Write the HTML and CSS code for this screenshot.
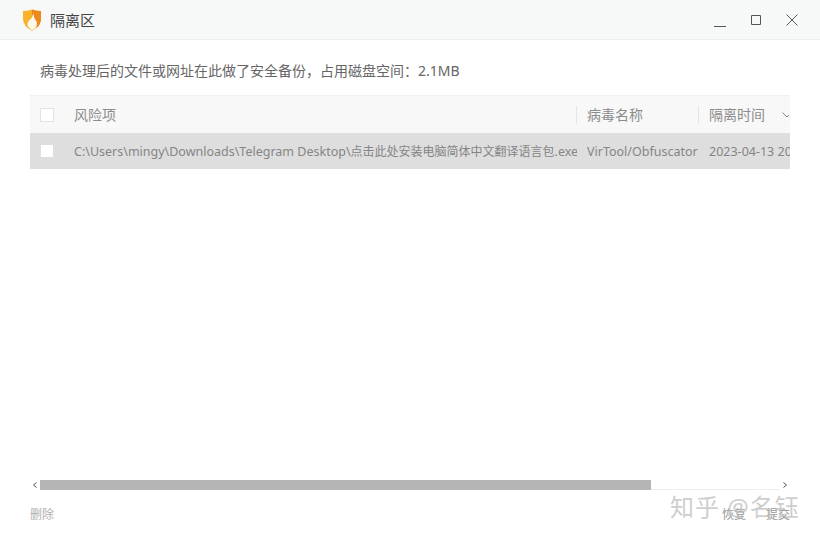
FILE: index.html
```html
<!DOCTYPE html>
<html lang="zh-CN">
<head>
<meta charset="utf-8">
<title>隔离区</title>
<link rel="stylesheet" href="styles.css">
</head>
<body>
<div class="window">
  <header class="titlebar">
    <svg class="logo" width="20" height="22" viewBox="0 0 20 22">
      <path d="M1 2 Q5 2 10 0.5 Q15 2 19 2 L19 10 Q19 17 10 22 Q1 17 1 10 Z" fill="#f7b32b"/>
      <path d="M10 0.5 Q15 2 19 2 L19 10 Q19 15 15 18.5 L10 5 Z" fill="#ee8a1c"/>
      <path d="M11.5 4.5 Q10.5 9 7 11.5 Q4.5 14.5 6 17.5 Q8 20 10 21.5 Q14.5 19 15 15 Q15 12.5 13.5 11 Q11.5 8.5 11.5 4.5 Z" fill="#fdf6ea"/>
    </svg>
    <span class="title">隔离区</span>
    <div class="controls">
      <svg class="ctl" width="14" height="14" viewBox="0 0 14 14"><path d="M1 13.5H13" stroke="#555" fill="none"/></svg>
      <svg class="ctl" width="14" height="14" viewBox="0 0 14 14"><path d="M2.5 2.5H11.5V11.5H2.5Z" stroke="#555" fill="none"/></svg>
      <svg class="ctl" width="14" height="14" viewBox="0 0 14 14"><path d="M1.5 1.5L12.5 12.5M12.5 1.5L1.5 12.5" stroke="#555" fill="none"/></svg>
    </div>
  </header>
  <main class="content">
    <p class="desc">病毒处理后的文件或网址在此做了安全备份，占用磁盘空间：2.1MB</p>
    <div class="table">
      <div class="row head">
        <div class="cell c-check"><span class="box"></span></div>
        <div class="cell c-path">风险项</div>
        <div class="cell c-name sep">病毒名称</div>
        <div class="cell c-time sep">隔离时间
          <svg class="chev" width="10" height="6" viewBox="0 0 10 6"><path d="M0.5 0.5L5 5L9.5 0.5" stroke="#888" fill="none"/></svg>
        </div>
      </div>
      <div class="row item">
        <div class="cell c-check"><span class="box solid"></span></div>
        <div class="cell c-path">C:\Users\mingy\Downloads\Telegram Desktop\<span class="cjk">点击此处安装电脑简体中文翻译语言包</span>.exe</div>
        <div class="cell c-name">VirTool/Obfuscator</div>
        <div class="cell c-time">2023-04-13 20:15:32</div>
      </div>
    </div>
    <div class="scrollbar">
      <svg class="arrow" width="10" height="10" viewBox="0 0 10 10"><path d="M6.5 2.5L3.5 5L6.5 7.5" stroke="#555" fill="none"/></svg>
      <div class="track"><div class="thumb"></div></div>
      <svg class="arrow" width="10" height="10" viewBox="0 0 10 10"><path d="M3.5 2.5L6.5 5L3.5 7.5" stroke="#555" fill="none"/></svg>
    </div>
    <footer class="actions">
      <span class="action">删除</span>
      <div class="right">
        <span class="action">恢复</span>
        <span class="action">提交</span>
      </div>
    </footer>
  </main>
  <div class="watermark">知乎 @名钰</div>
</div>
</body>
</html>
```

FILE: styles.css
```css
* { box-sizing: border-box; }
html, body { margin: 0; padding: 0; }
body {
  width: 820px;
  height: 540px;
  overflow: hidden;
  background: #fff;
  font-family: "Noto Sans", "Noto Sans CJK SC", sans-serif;
  color: #555;
}
.window { position: relative; width: 820px; height: 540px; display: flex; flex-direction: column; }
.titlebar {
  height: 40px;
  flex: none;
  display: flex;
  align-items: center;
  padding: 0 21px 0 22px;
  background: #f7f8f8;
  border-bottom: 1px solid #eeeeee;
}
.logo { flex: none; margin-right: 8px; }
.title { font-size: 15px; color: #444; }
.controls { margin-left: auto; display: flex; gap: 22px; align-items: center; }
.ctl { display: block; }
.content { flex: 1; display: flex; flex-direction: column; padding: 0 30px; }
.desc { margin: 21px 0 14px 10px; font-size: 14px; line-height: 20px; color: #666; }
.table { width: 760px; overflow: hidden; }
.row { display: flex; align-items: center; white-space: nowrap; }
.head {
  height: 38px;
  background: #f8f8f8;
  border-top: 1px solid #f0f0f0;
  font-size: 14px;
  line-height: 18px;
  color: #8c8c8c;
}
.head .c-path, .head .c-name, .head .c-time { margin-top: 1px; }
.item { height: 36px; background: #dedede; font-size: 12.5px; line-height: 18px; color: #858585; }
.item .c-path, .item .c-name, .item .c-time { margin-top: 2px; }
.cjk { font-size: 12px; }
.cell { flex: none; overflow: hidden; }
.c-check { width: 44px; display: flex; padding-left: 10px; }
.c-path { width: 503px; }
.c-name { width: 122px; padding-left: 10px; }
.c-time { width: 91px; padding-left: 10px; position: relative; }
.sep { border-left: 1px solid #e4e4e4; }
.head .sep { margin-left: -1px; margin-right: 1px; }
.box { width: 14px; height: 14px; border: 1px solid #e2e2e2; background: #fff; display: block; }
.box.solid { width: 12px; height: 12px; margin-left: 1px; border: 0; }
.chev { position: absolute; left: 83px; top: 6px; }
.scrollbar { margin-top: 311px; height: 10px; width: 760px; display: flex; align-items: center; }
.arrow { flex: none; display: block; }
.track { flex: 1; height: 10px; border-bottom: 1px solid #eee; }
.thumb { width: 611px; height: 10px; background: #b5b5b5; }
.actions { display: flex; justify-content: space-between; margin-top: 16px; font-size: 12px; line-height: 18px; color: #b0b0b0; }
.right { display: flex; gap: 20px; color: #999; }
.watermark {
  position: absolute;
  left: 670px;
  top: 491px;
  font-size: 24px;
  line-height: 32px;
  letter-spacing: 1px;
  white-space: nowrap;
  color: rgba(190, 190, 190, 0.75);
}
```
